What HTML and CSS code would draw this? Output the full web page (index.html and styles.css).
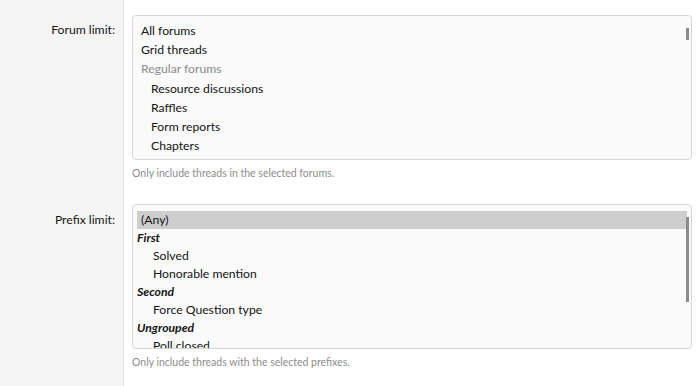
FILE: index.html
```html
<!DOCTYPE html>
<html lang="en">
<head>
    <meta charset="UTF-8">
    <title>Thread filters</title>
    <link rel="stylesheet" href="styles.css">
</head>
<body>

    <div class="form">
        <div class="row">
            <div class="label">Forum limit:</div>
            <div class="field">
                <div class="listbox">
                    <div class="option">All forums</div>
                    <div class="option">Grid threads</div>
                    <div class="option disabled">Regular forums</div>
                    <div class="option child">Resource discussions</div>
                    <div class="option child">Raffles</div>
                    <div class="option child">Form reports</div>
                    <div class="option child">Chapters</div>
                    <span class="thumb thumb-forums"></span>
                </div>
                <div class="hint">Only include threads in the selected forums.</div>
            </div>
        </div>

        <div class="row last">
            <div class="label">Prefix limit:</div>
            <div class="field">
                <div class="listbox prefixes">
                    <div class="option selected">(Any)</div>
                    <div class="group">First</div>
                    <div class="option child">Solved</div>
                    <div class="option child">Honorable mention</div>
                    <div class="group">Second</div>
                    <div class="option child">Force Question type</div>
                    <div class="group">Ungrouped</div>
                    <div class="option child">Poll closed</div>
                    <span class="thumb thumb-prefixes"></span>
                </div>
                <div class="hint">Only include threads with the selected prefixes.</div>
            </div>
        </div>
    </div>

</body>
</html>
```

FILE: styles.css
```css
* { box-sizing: border-box; margin: 0; padding: 0; }
body { font-family: Lato, "Noto Sans", sans-serif; font-size: 12.2px; color: #141414; background: #fff; }
.form { display: flex; flex-direction: column; min-height: 100vh; }
.row { display: grid; grid-template-columns: 124px 1fr; }
.row.last { flex: 1; }
.label {
    background: #f5f5f5; border-right: 1px solid #e4e4e4;
    text-align: right; padding: 21px 8px 0 0; line-height: 18px;
}
.row.last .label { padding-top: 22px; }
.field { padding: 15px 4px 9px 8px; }
.row.last .field { padding-bottom: 0; }
.listbox {
    position: relative; height: 145px; overflow: hidden;
    background: #fafafa; border: 1px solid #d6d6d6; border-radius: 4px;
    padding: 5px 0 0 4px;
}
.listbox.prefixes { padding-top: 6px; }
.option { line-height: 19.2px; padding-left: 4px; white-space: nowrap; }
.option.child { padding-left: 14px; }
.option.disabled { color: #8a8a8a; }
.prefixes .option, .prefixes .group { line-height: 18px; }
.prefixes .option.child { padding-left: 16px; }
.group { font-weight: bold; font-style: italic; }
.option.selected { background: #cecece; margin-right: 4px; }
.thumb { position: absolute; right: 2px; width: 3px; background: #8c8c8c; }
.thumb-forums { top: 12px; height: 12px; }
.thumb-prefixes { top: 12px; height: 85px; }
.hint { font-size: 10.5px; color: #8c8c8c; margin-top: 7px; line-height: 13px; }
```
